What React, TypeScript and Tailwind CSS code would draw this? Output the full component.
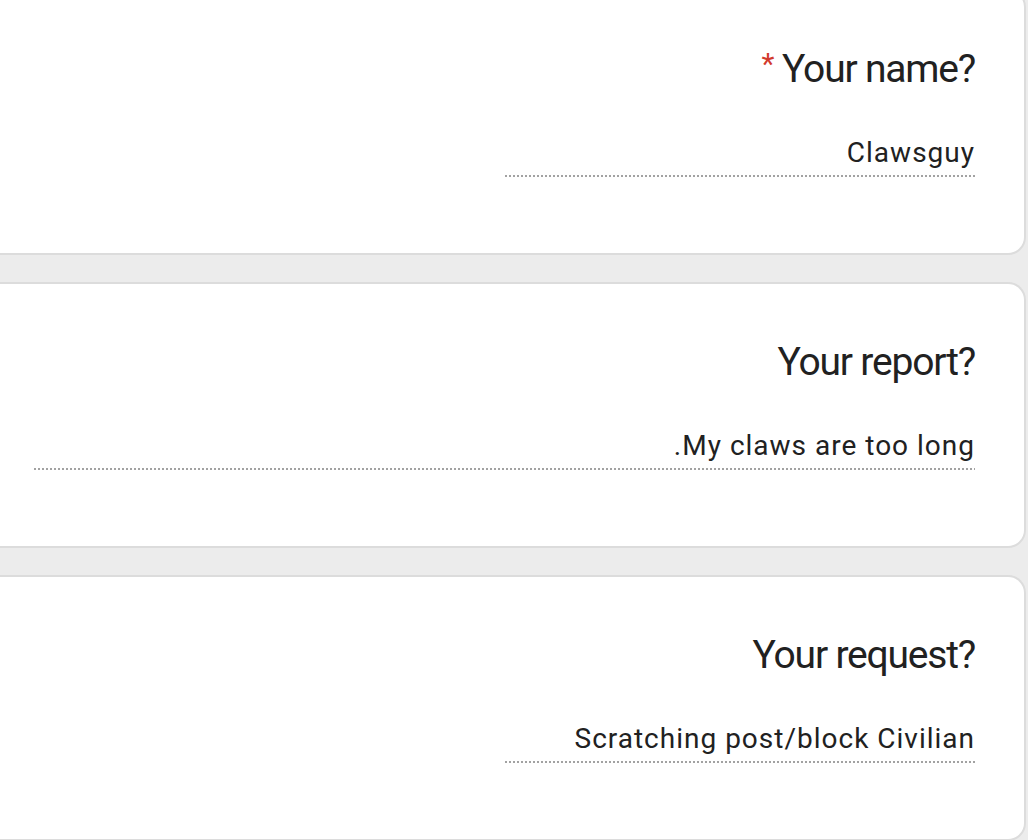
const fields = [
  { title: 'Your name?', answer: 'Clawsguy', required: true, short: true },
  { title: 'Your report?', answer: '.My claws are too long', required: false, short: false },
  { title: 'Your request?', answer: 'Scratching post/block Civilian', required: false, short: true },
]

function Dots() {
  return (
    <div className="h-[2px] w-full bg-[repeating-linear-gradient(to_right,#a2a2a2_0,#a2a2a2_2px,transparent_2px,transparent_4px)]" />
  )
}

function Card({ title, answer, required, short }: { title: string; answer: string; required: boolean; short: boolean }) {
  return (
    <div className="box-border h-[266px] shrink-0 rounded-r-[18px] border-2 border-l-0 border-[#dcdcdc] bg-white pl-[52px] pr-[49px] pt-[55px]">
      <div className="flex items-start justify-end text-[39px] leading-[46px] tracking-[-1.2px] text-[#212121]">
        {required && <span className="mr-[9px] mt-[-5px] text-[30px] text-[#d2392c]">*</span>}
        <span>{title}</span>
      </div>
      <div className="mt-[44px] flex justify-end">
        <div className={short ? 'w-1/2' : 'w-full'}>
          <div className="pb-[5px] text-right text-[28px] leading-[34px] tracking-[1px] text-[#212121] [font-family:Roboto,'Liberation_Sans',sans-serif]">
            {answer}
          </div>
          <Dots />
        </div>
      </div>
    </div>
  )
}

export default function App() {
  return (
    <div className="h-[840px] w-[1028px] overflow-hidden bg-[#ececec] [font-family:Roboto,'Noto_Sans',sans-serif]">
      <div className="-ml-[18px] -mt-[11px] mr-[2px] flex flex-col gap-[27px]">
        {fields.map((f) => (
          <Card key={f.title} {...f} />
        ))}
      </div>
    </div>
  )
}
